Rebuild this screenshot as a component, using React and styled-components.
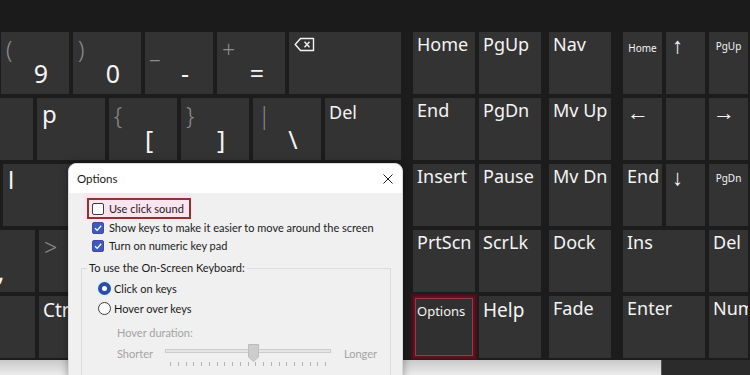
import React from 'react'
import styled, { createGlobalStyle } from 'styled-components'

const GlobalStyle = createGlobalStyle`
  html, body {
    margin: 0;
    padding: 0;
    background: #1c1c1c;
  }
  body {
    width: 750px;
    height: 375px;
    overflow: hidden;
  }
`

const Screen = styled.div`
  position: relative;
  width: 750px;
  height: 375px;
  overflow: hidden;
  background: #1c1c1c;
  display: flex;
  flex-direction: column;
  font-family: "Noto Sans", "Open Sans", sans-serif;
`

const TopBand = styled.div`
  height: 32px;
  flex: none;
  background: #1b1b1b;
`

const Keyboard = styled.div`
  display: flex;
  height: 326px;
  flex: none;
`

const MainBlock = styled.div`
  width: 401px;
  flex: none;
  display: flex;
  flex-direction: column;
  gap: 4px;
`

const KeyRow = styled.div`
  display: flex;
  gap: 4px;
  height: 62px;
  margin-left: ${({ $offset }) => $offset}px;
`

const NavBlock = styled.div`
  margin-left: 12px;
  display: flex;
  gap: 8px;
`

const NavGrid = styled.div`
  display: grid;
  grid-template-columns: repeat(${({ $cols }) => $cols}, ${({ $col }) => $col}px);
  grid-auto-rows: 62px;
  gap: 4px;
`

const NumGrid = styled(NavGrid)`
  margin-left: 12px;
`

const Key = styled.div`
  flex: ${({ $grow }) => ($grow ? '1' : 'none')};
  width: ${({ $w }) => ($w ? `${$w}px` : 'auto')};
  grid-column: ${({ $span }) => ($span ? `span ${$span}` : 'auto')};
  background: #333333;
  color: #f4f4f4;
  display: flex;
  flex-direction: column;
  overflow: hidden;
  ${({ $picked }) => $picked && `
    box-shadow: 0 0 0 2px #4f0c1b, inset 0 0 0 2px #5b1323, inset 0 0 0 3px #8e4040;
    background: #303030;
  `}
`

const Sec = styled.span`
  font-size: 23px;
  line-height: 22px;
  height: 22px;
  padding: 6px 0 0 5px;
  color: #8c8c8c;
  font-weight: 300;
`

const Prim = styled.span`
  margin-top: auto;
  width: 16px;
  padding: 0 0 9px 32px;
  font-size: 25px;
  line-height: 24px;
  text-align: center;
  white-space: nowrap;
`

const Letter = styled.span`
  font-size: 24px;
  line-height: 24px;
  padding: 4px 0 0 5px;
`

const Word = styled.span`
  font-size: ${({ $size }) => $size || 18}px;
  line-height: 22px;
  padding: ${({ $pt }) => ($pt === undefined ? 1 : $pt)}px 0 0 4px;
  white-space: nowrap;
`

const Small = styled.span`
  font-size: 10px;
  line-height: 14px;
  text-align: center;
  padding-top: ${({ $pt }) => $pt}px;
`

const Arrow = styled.span`
  font-family: "Liberation Sans", "DejaVu Sans", sans-serif;
  font-size: 22px;
  line-height: 24px;
  padding: ${({ $pt }) => $pt || 3}px 0 0 ${({ $pl }) => $pl || 5}px;
`

const IconWrap = styled.span`
  display: flex;
  padding: 5px 0 0 5px;
`

const GapLine = styled.div`
  height: 2px;
  flex: none;
`

const BottomBand = styled.div`
  flex: 1;
  display: flex;
`

const LightStrip = styled.div`
  width: 661px;
  background: linear-gradient(#c9c9c9, #ececec);
`

const DarkStrip = styled.div`
  flex: 1;
  background: #2b2b2b;
  border-left: 1px solid #555;
`

/* options dialog */

const Dialog = styled.div`
  position: absolute;
  left: 68px;
  top: 163px;
  width: 335px;
  height: 240px;
  box-sizing: border-box;
  background: #f0f0f0;
  border: 1px solid #dadada;
  border-radius: 8px 8px 0 0;
  overflow: hidden;
  font-family: Lato, "Noto Sans", sans-serif;
  font-size: 11px;
  color: #1a1a1a;
  box-shadow: 0 0 8px rgba(0, 0, 0, 0.35);
`

const TitleBar = styled.div`
  height: 29px;
  background: #ffffff;
  display: flex;
  align-items: center;
  justify-content: space-between;
  padding: 0 9px 0 8px;
  font-size: 11.5px;
`

const Body = styled.div`
  display: flex;
  flex-direction: column;
  align-items: flex-start;
`

const Pink = styled.div`
  width: 108px;
  height: 28px;
  margin-left: 15px;
  background: #fce4ef;
`

const RedBox = styled.div`
  display: inline-flex;
  margin: 5px 0 0 3px;
  border: 2px solid #8a3434;
  padding: 3px 5px 2px 3px;
`

const CheckRow = styled.div`
  display: flex;
  align-items: center;
  gap: 5px;
  height: 12px;
  line-height: 12px;
  white-space: nowrap;
  margin: ${({ $mt }) => $mt || 0}px 0 0 ${({ $ml }) => $ml || 0}px;
`

const Box = styled.span`
  width: 12px;
  height: 12px;
  box-sizing: border-box;
  border-radius: 2px;
  border: 1px solid ${({ $on }) => ($on ? '#4b43a6' : '#3a3a3a')};
  background: ${({ $on }) => ($on ? '#3a5cbc' : '#ffffff')};
  display: flex;
  align-items: center;
  justify-content: center;
`

const Group = styled.fieldset`
  margin: 8px 0 0 12px;
  width: 310px;
  box-sizing: border-box;
  border: 1px solid #dcdcdc;
  padding: 0;
  min-width: 0;
  height: 140px;
`

const Legend = styled.legend`
  margin-left: 5px;
  padding: 0 2px;
  line-height: 16px;
  font-size: 11px;
`

const RadioRow = styled.div`
  display: flex;
  align-items: center;
  gap: 3px;
  height: 14px;
  margin: ${({ $mt }) => $mt}px 0 0 16px;
`

const Radio = styled.span`
  width: 13px;
  height: 13px;
  box-sizing: border-box;
  border-radius: 50%;
  background: #fff;
  border: ${({ $on }) => ($on ? '4px solid #2c4ca8' : '1px solid #3a3a3a')};
  ${({ $on }) => $on && 'box-shadow: 0 0 0 2px #dcf4f6;'}
`

const Muted = styled.div`
  color: #a3a3a3;
  line-height: 16px;
  margin: ${({ $mt }) => $mt || 0}px 0 0 ${({ $ml }) => $ml || 0}px;
  width: ${({ $w }) => ($w ? `${$w}px` : 'auto')};
  flex: none;
`

const SliderRow = styled.div`
  display: flex;
  align-items: flex-start;
  margin: 1px 0 0 35px;
  height: 26px;
`

const Track = styled.div`
  width: 166px;
  margin-top: 7px;
  flex: none;
`

const Rail = styled.div`
  position: relative;
  height: 4px;
  box-sizing: border-box;
  background: #e6e6e6;
  border: 1px solid #cdcdcd;
`

const Thumb = styled.svg`
  position: absolute;
  left: 82px;
  top: -6px;
`

const Ticks = styled.div`
  display: flex;
  justify-content: space-between;
  margin: 9px 5px 0;
`

const Tick = styled.span`
  width: 1px;
  height: 4px;
  background: #b4b4b4;
`

const Backspace = () => (
  <svg width="21" height="15" viewBox="0 0 21 15">
    <path d="M6.5 1.5 H19.5 V13.5 H6.5 L1.2 7.5 Z" fill="none" stroke="#f4f4f4" strokeWidth="1.4" strokeLinejoin="round" />
    <path d="M10.5 4.8 L15.5 10.2 M15.5 4.8 L10.5 10.2" stroke="#f4f4f4" strokeWidth="1.4" />
  </svg>
)

const Check = () => (
  <svg width="10" height="10" viewBox="0 0 10 10">
    <polyline points="2,5.2 4.2,7.4 8.2,2.8" fill="none" stroke="#fff" strokeWidth="1.3" />
  </svg>
)

const SymKey = ({ sec, prim, w = 68 }) => (
  <Key $w={w}>
    <Sec>{sec}</Sec>
    <Prim>{prim}</Prim>
  </Key>
)

function App() {
  return (
    <Screen>
      <GlobalStyle />
      <TopBand />
      <Keyboard>
        <MainBlock>
          <KeyRow $offset={1}>
            <SymKey sec="(" prim="9" />
            <SymKey sec=")" prim="0" />
            <SymKey sec="_" prim="-" />
            <SymKey sec="+" prim="=" />
            <Key $grow><IconWrap><Backspace /></IconWrap></Key>
          </KeyRow>
          <KeyRow $offset={-35}>
            <Key $w={68} />
            <Key $w={68}><Letter>p</Letter></Key>
            <SymKey sec="{" prim="[" />
            <SymKey sec="}" prim="]" />
            <SymKey sec="|" prim="\" />
            <Key $grow><Word $pt={3}>Del</Word></Key>
          </KeyRow>
          {/* keys under the dialog are left blank */}
          <KeyRow $offset={3}>
            <Key $w={68}><Letter>l</Letter></Key>
            <Key $w={68} />
            <Key $w={68} />
            <Key $grow />
          </KeyRow>
          <KeyRow $offset={-39}>
            <SymKey sec="" prim="," w={74} />
            <SymKey sec=">" prim="" />
            <Key $w={68} />
            <Key $w={68} />
            <Key $grow />
          </KeyRow>
          <KeyRow $offset={-33}>
            <Key $w={68} />
            <Key $w={68}><Word $size={19} $pt={3}>Ctrl</Word></Key>
            <Key $w={68} />
            <Key $w={68} />
            <Key $grow />
          </KeyRow>
        </MainBlock>

        <NavBlock>
          <NavGrid $cols={2} $col={62}>
            <Key><Word>Home</Word></Key>
            <Key><Word>PgUp</Word></Key>
            <Key><Word>End</Word></Key>
            <Key><Word>PgDn</Word></Key>
            <Key><Word>Insert</Word></Key>
            <Key><Word>Pause</Word></Key>
            <Key><Word>PrtScn</Word></Key>
            <Key><Word>ScrLk</Word></Key>
            <Key $picked><Word $size={13} $pt={4}>Options</Word></Key>
            <Key><Word $size={19} $pt={3}>Help</Word></Key>
          </NavGrid>
          <NavGrid $cols={1} $col={62}>
            <Key><Word>Nav</Word></Key>
            <Key><Word>Mv Up</Word></Key>
            <Key><Word>Mv Dn</Word></Key>
            <Key><Word>Dock</Word></Key>
            <Key><Word>Fade</Word></Key>
          </NavGrid>
        </NavBlock>

        <NumGrid $cols={3} $col={39}>
          <Key><Small $pt={9}>Home</Small></Key>
          <Key><Arrow $pl={6} $pt={2}>↑</Arrow></Key>
          <Key><Small $pt={7}>PgUp</Small></Key>
          <Key><Arrow $pl={4} $pt={3}>←</Arrow></Key>
          <Key />
          <Key><Arrow $pl={4} $pt={3}>→</Arrow></Key>
          <Key><Word>End</Word></Key>
          <Key><Arrow $pl={6} $pt={2}>↓</Arrow></Key>
          <Key><Small $pt={7}>PgDn</Small></Key>
          <Key $span={2}><Word>Ins</Word></Key>
          <Key><Word>Del</Word></Key>
          <Key $span={2}><Word>Enter</Word></Key>
          <Key><Word>Num</Word></Key>
        </NumGrid>
      </Keyboard>
      <GapLine />
      <BottomBand>
        <LightStrip />
        <DarkStrip />
      </BottomBand>

      <Dialog>
        <TitleBar>
          <span>Options</span>
          <svg width="10" height="10" viewBox="0 0 10 10">
            <path d="M0.5 0.5 L9.5 9.5 M9.5 0.5 L0.5 9.5" stroke="#1f1f1f" strokeWidth="1" />
          </svg>
        </TitleBar>
        <Body>
          <Pink>
            <RedBox>
              <CheckRow>
                <Box />
                <span>Use click sound</span>
              </CheckRow>
            </RedBox>
          </Pink>
          <CheckRow $mt={1} $ml={23}>
            <Box $on><Check /></Box>
            <span>Show keys to make it easier to move around the screen</span>
          </CheckRow>
          <CheckRow $mt={6} $ml={23}>
            <Box $on><Check /></Box>
            <span>Turn on numeric key pad</span>
          </CheckRow>
          <Group>
            <Legend>To use the On-Screen Keyboard:</Legend>
            <RadioRow $mt={5}>
              <Radio $on />
              <span>Click on keys</span>
            </RadioRow>
            <RadioRow $mt={6}>
              <Radio />
              <span>Hover over keys</span>
            </RadioRow>
            <Muted $mt={10} $ml={35}>Hover duration:</Muted>
            <SliderRow>
              <Muted $mt={4} $w={48}>Shorter</Muted>
              <Track>
                <Rail>
                  <Thumb width="11" height="18" viewBox="0 0 11 18">
                    <polygon points="0.5,0.5 10.5,0.5 10.5,13 5.5,17.5 0.5,13" fill="#cdcdcd" stroke="#bdbdbd" />
                  </Thumb>
                </Rail>
                <Ticks>
                  {Array.from({ length: 21 }).map((_, i) => <Tick key={i} />)}
                </Ticks>
              </Track>
              <Muted $mt={4} $ml={13}>Longer</Muted>
            </SliderRow>
          </Group>
        </Body>
      </Dialog>
    </Screen>
  )
}

export default App
